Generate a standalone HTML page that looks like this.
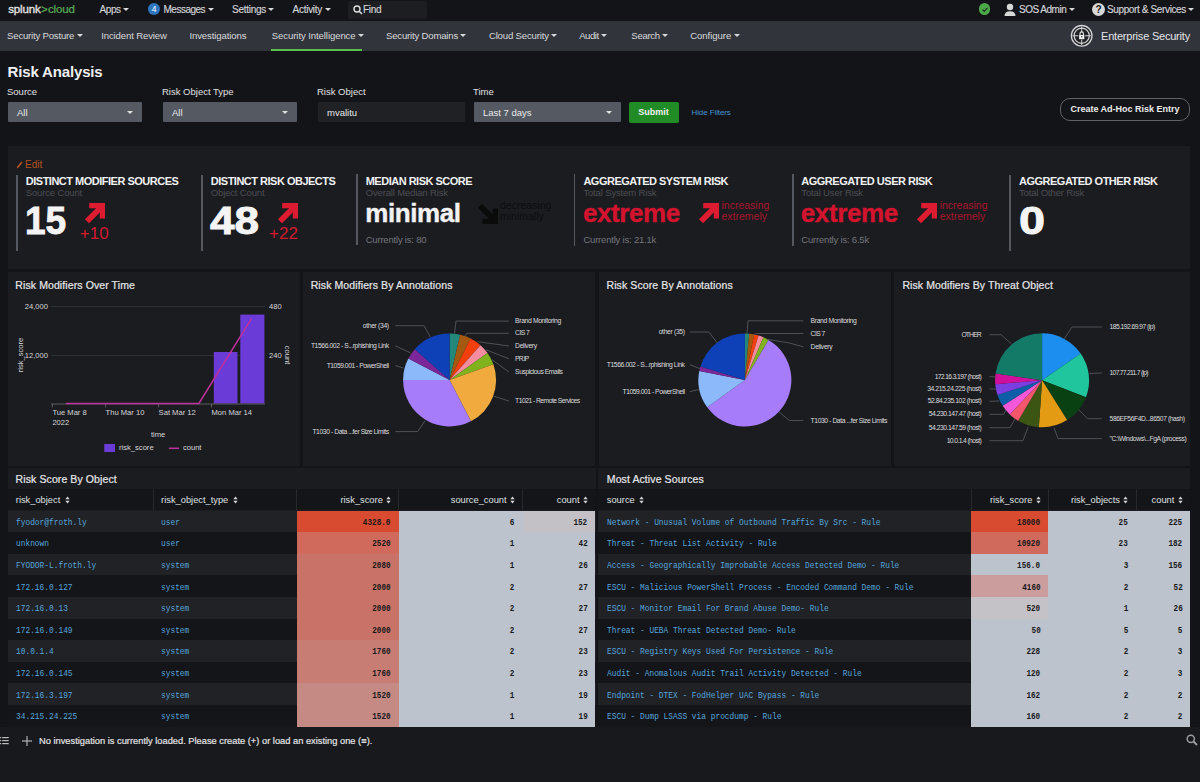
<!DOCTYPE html>
<html><head><meta charset="utf-8">
<style>
*{margin:0;padding:0;box-sizing:border-box}
html,body{width:1200px;height:782px;overflow:hidden;background:#131417;font-family:"Liberation Sans",sans-serif;color:#e6e7e9}
.a{position:absolute;white-space:nowrap}
.tri{display:inline-block;width:0;height:0;border-left:3px solid transparent;border-right:3px solid transparent;border-top:3.5px solid #d8d9db;vertical-align:middle;margin-left:2.5px;letter-spacing:0;position:relative;top:-1px}
#top{position:absolute;left:0;top:0;width:1200px;height:21px;background:#131417}
#top .t{position:absolute;white-space:nowrap;top:4px;font-size:10px;color:#d4d5d8;line-height:12px;-webkit-text-stroke:0.15px #d4d5d8}
#nav{position:absolute;left:0;top:21px;width:1200px;height:30px;background:#31343b}
#nav .t{position:absolute;white-space:nowrap;top:9px;font-size:9.6px;color:#d8d9dc;line-height:11px}
.lbl{position:absolute;white-space:nowrap;top:86px;font-size:9.5px;color:#e0e1e3;line-height:11px}
.dd{position:absolute;top:102px;height:20px;background:#545962;border-radius:1px}
.dd span{position:absolute;left:9px;top:5px;font-size:9.5px;color:#e8e9eb;line-height:11px}
.dd i{position:absolute;right:9px;top:9px;width:0;height:0;border-left:3px solid transparent;border-right:3px solid transparent;border-top:3px solid #e0e0e0}
.svt{top:176.2px;font-size:11px;line-height:11px;font-weight:bold;letter-spacing:-0.5px;color:#f0f1f2}
.svs{top:188.4px;font-size:9.5px;line-height:9.5px;color:#4b4d52;letter-spacing:-0.15px}
.svn{top:201.4px;font-size:39px;line-height:39px;font-weight:bold;color:#f4f4f4;-webkit-text-stroke:0.9px #f4f4f4}
.svd{top:225px;font-size:17px;line-height:17px;color:#d21a2f}
.svw{top:200px;font-size:26px;line-height:26px;font-weight:bold;letter-spacing:-0.4px;-webkit-text-stroke:0.4px currentColor}
.svx{top:199.5px;font-size:10.5px;line-height:11.5px}
.svc{top:234.9px;font-size:9.5px;line-height:9.5px;color:#74767b;letter-spacing:-0.2px}
.ptitle{font-size:10.5px;line-height:10.5px;color:#e6e7e9;letter-spacing:0.1px;-webkit-text-stroke:0.2px #e6e7e9}
.cax{font-size:7.6px;line-height:10px;color:#d6d7d9}
.plab{font-size:6.8px;line-height:8px;color:#dcdcde}
.th{font-size:9.3px;line-height:10px;color:#dfe0e2}
.td{font-family:"Liberation Mono",monospace;font-size:9px;line-height:10px;color:#58a6dc;transform:scaleX(0.873);transform-origin:0 0}
.tn{font-family:"Liberation Mono",monospace;font-size:9px;line-height:10px;color:#17181a;font-weight:bold;transform:scaleX(0.85);transform-origin:100% 0}
</style></head>
<body>
<div id="top">
  <div class="a" style="left:8.2px;top:3px;font-size:11.5px;line-height:13px;letter-spacing:-0.15px;-webkit-text-stroke:0.35px #e2e2e2"><span style="color:#e2e2e2">splunk</span><span style="color:#5cb35a;-webkit-text-stroke:0.2px #5cb35a;margin-left:0.5px">&gt;</span><span style="color:#5cb35a;-webkit-text-stroke:0.2px #5cb35a;margin-left:0.3px">cloud</span></div>
  <div class="t" style="left:99.6px;letter-spacing:-0.45px">Apps<span class="tri"></span></div>
  <div class="a" style="left:148px;top:3px;width:12px;height:12px;border-radius:6px;background:#2f76c0;color:#fff;font-size:8.5px;line-height:12px;text-align:center">4</div>
  <div class="t" style="left:163.5px;letter-spacing:-0.5px">Messages<span class="tri"></span></div>
  <div class="t" style="left:232px;letter-spacing:-0.27px">Settings<span class="tri"></span></div>
  <div class="t" style="left:292.6px;letter-spacing:-0.28px">Activity<span class="tri"></span></div>
  <div class="a" style="left:348px;top:1px;width:79px;height:18px;background:#1c1e22;border-radius:2px"></div>
  <svg class="a" style="left:353px;top:5px" width="10" height="10" viewBox="0 0 10 10"><circle cx="4" cy="4" r="3" fill="none" stroke="#ddd" stroke-width="1.4"/><line x1="6.2" y1="6.2" x2="9" y2="9" stroke="#ddd" stroke-width="1.6"/></svg>
  <div class="t" style="left:363px;letter-spacing:-0.3px">Find</div>
  <div class="a" style="left:978.7px;top:3.3px;width:11.5px;height:11.5px;border-radius:6px;background:#4da84a"></div>
  <svg class="a" style="left:980.5px;top:5.6px" width="8" height="7" viewBox="0 0 8 7"><path d="M1.5 3.6 L3.3 5.3 L6.5 1.8" fill="none" stroke="#163016" stroke-width="1.2"/></svg>
  <svg class="a" style="left:1004px;top:3px" width="12" height="14" viewBox="0 0 12 14"><circle cx="6" cy="4" r="3.2" fill="#d8d8d8"/><path d="M0.5 13 Q0.5 8.2 6 8.2 Q11.5 8.2 11.5 13 Z" fill="#d8d8d8"/></svg>
  <div class="t" style="left:1019px;letter-spacing:-0.5px">SOS Admin<span class="tri"></span></div>
  <div class="a" style="left:1092px;top:3px;width:13px;height:13px;border-radius:7px;background:#d8d8d8;color:#131417;font-weight:bold;font-size:10px;line-height:13px;text-align:center">?</div>
  <div class="t" style="left:1107px;letter-spacing:-0.37px">Support &amp; Services<span class="tri"></span></div>
</div>
<div id="nav">
  <div class="t" style="left:7.1px;letter-spacing:-0.21px">Security Posture<span class="tri"></span></div>
  <div class="t" style="left:101.2px;letter-spacing:-0.14px">Incident Review</div>
  <div class="t" style="left:189.4px;letter-spacing:-0.12px">Investigations</div>
  <div class="t" style="left:271.8px;letter-spacing:-0.1px">Security Intelligence<span class="tri"></span></div>
  <div class="a" style="left:271px;top:28px;width:91px;height:2px;background:#5cc04e"></div>
  <div class="t" style="left:386px;letter-spacing:-0.2px">Security Domains<span class="tri"></span></div>
  <div class="t" style="left:488.9px;letter-spacing:-0.17px">Cloud Security<span class="tri"></span></div>
  <div class="t" style="left:579.2px;letter-spacing:-0.5px">Audit<span class="tri"></span></div>
  <div class="t" style="left:631.3px;letter-spacing:-0.31px">Search<span class="tri"></span></div>
  <div class="t" style="left:690.2px;letter-spacing:-0.06px">Configure<span class="tri"></span></div>
  <svg class="a" style="left:1070px;top:3px" width="24" height="24" viewBox="0 0 24 24">
    <circle cx="11.7" cy="11.8" r="11" fill="#202226"/>
    <circle cx="11.7" cy="11.8" r="10.3" fill="none" stroke="#d4d5d7" stroke-width="1.3"/>
    <circle cx="11.7" cy="11.8" r="7.6" fill="none" stroke="#d4d5d7" stroke-width="1.2"/>
    <path d="M11.7 2.5 V8.2 M11.7 15.8 V21.2 M2.4 11.8 H8.3 M15.1 11.8 H21" stroke="#d4d5d7" stroke-width="1"/>
    <rect x="9.1" y="11" width="5.2" height="4.2" fill="#f0f0f0"/>
    <path d="M10 11 V9.6 A1.7 1.7 0 0 1 13.4 9.6 V11" fill="none" stroke="#e8e8e8" stroke-width="1.1"/>
    <circle cx="11.7" cy="12.8" r="0.7" fill="#333"/>
  </svg>
  <div class="a" style="left:1101px;top:9px;font-size:11px;line-height:13px;color:#e4e5e7;letter-spacing:-0.21px">Enterprise Security</div>
</div>

<div class="a" style="left:7.5px;top:63px;font-size:15px;font-weight:bold;line-height:17px;color:#eeeff1;letter-spacing:-0.15px">Risk Analysis</div>
<div class="lbl" style="left:7px">Source</div>
<div class="lbl" style="left:162px">Risk Object Type</div>
<div class="lbl" style="left:317px">Risk Object</div>
<div class="lbl" style="left:473px">Time</div>
<div class="dd" style="left:8px;width:134px"><span>All</span><i></i></div>
<div class="dd" style="left:163px;width:134px"><span>All</span><i></i></div>
<div class="dd" style="left:318px;width:147px;background:#1f2125"><span>mvalitu</span></div>
<div class="dd" style="left:474px;width:147px"><span>Last 7 days</span><i></i></div>
<div class="a" style="left:628.5px;top:101.5px;width:50px;height:21.5px;background:#218b26;border-radius:2px;color:#f2f2f2;font-size:9px;font-weight:bold;line-height:21.5px;text-align:center">Submit</div>
<div class="a" style="left:691.5px;top:108px;font-size:8px;line-height:10px;color:#4494d4;letter-spacing:-0.1px">Hide Filters</div>
<div class="a" style="left:1060px;top:98.3px;width:130px;height:23px;border:1px solid #606268;border-radius:10px;color:#ececec;font-size:9px;font-weight:bold;line-height:21px;text-align:center">Create Ad-Hoc Risk Entry</div>

<!-- SINGLE VALUES -->
<div id="sv" class="a" style="left:8px;top:146px;width:1182px;height:123px;background:#1b1c20"></div>

<div class="a" style="left:16px;top:159.8px;font-size:10px;line-height:10px;color:#b3521f"><svg width="7" height="8" viewBox="0 0 7 8" style="vertical-align:-1px;margin-right:2px"><path d="M0.8 7.6 L1.2 5.6 L5.4 0.6 L6.6 1.6 L2.4 6.8 Z" fill="#b3521f"/></svg>Edit</div>
<div class="a" style="left:16.0px;top:175px;width:1.5px;height:76px;background:#55585e"></div>
<div class="a svt" style="left:25.8px">DISTINCT MODIFIER SOURCES</div>
<div class="a svs" style="left:25.8px">Source Count</div>
<div class="a svn" style="left:24.8px;transform:scaleX(0.95);transform-origin:0 0">15</div>
<svg class="a" style="left:83.6px;top:203px" width="21" height="21" viewBox="0 0 21 21"><path d="M3 18.2 L16 5.2" stroke="#dd1b31" stroke-width="5.8"/><path d="M5.2 2.6 H18.4 V15.6" fill="none" stroke="#dd1b31" stroke-width="5.2"/></svg>
<div class="a svd" style="left:79.8px">+10</div>
<div class="a" style="left:201.0px;top:175px;width:1.5px;height:76px;background:#55585e"></div>
<div class="a svt" style="left:210.8px">DISTINCT RISK OBJECTS</div>
<div class="a svs" style="left:210.8px">Object Count</div>
<div class="a svn" style="left:209.8px;transform:scaleX(1.13);transform-origin:0 0">48</div>
<svg class="a" style="left:276.5px;top:203px" width="21" height="21" viewBox="0 0 21 21"><path d="M3 18.2 L16 5.2" stroke="#dd1b31" stroke-width="5.8"/><path d="M5.2 2.6 H18.4 V15.6" fill="none" stroke="#dd1b31" stroke-width="5.2"/></svg>
<div class="a svd" style="left:269px">+22</div>
<div class="a" style="left:356.0px;top:174px;width:1.5px;height:71px;background:#55585e"></div>
<div class="a svt" style="left:365.7px">MEDIAN RISK SCORE</div>
<div class="a svs" style="left:365.7px">Overall Median Risk</div>
<div class="a svw" style="left:365.2px;color:#f2f2f2">minimal</div>
<svg class="a" style="left:476.5px;top:204px" width="21" height="20" viewBox="0 0 21 20"><path d="M3 1.8 L16 14.8" stroke="#0b0b0c" stroke-width="5.8"/><path d="M5.2 17.4 H18.4 V4.4" fill="none" stroke="#0b0b0c" stroke-width="5.2"/></svg>
<div class="a svx" style="left:500px;color:#0d0d0f">decreasing<br>minimally</div>
<div class="a svc" style="left:365.7px">Currently is: 80</div>
<div class="a" style="left:573.5px;top:174px;width:1.5px;height:72px;background:#55585e"></div>
<div class="a svt" style="left:583.4px">AGGREGATED SYSTEM RISK</div>
<div class="a svs" style="left:583.4px">Total System Risk</div>
<div class="a svw" style="left:582.9px;color:#d4132f">extreme</div>
<svg class="a" style="left:697.5px;top:203px" width="21" height="21" viewBox="0 0 21 21"><path d="M3 18.2 L16 5.2" stroke="#dd1b31" stroke-width="5.8"/><path d="M5.2 2.6 H18.4 V15.6" fill="none" stroke="#dd1b31" stroke-width="5.2"/></svg>
<div class="a svx" style="left:721.5px;color:#a9152c">increasing<br>extremely</div>
<div class="a svc" style="left:583.4px">Currently is: 21.1k</div>
<div class="a" style="left:792.0px;top:174px;width:1.5px;height:72px;background:#55585e"></div>
<div class="a svt" style="left:801.3px">AGGREGATED USER RISK</div>
<div class="a svs" style="left:801.3px">Total User Risk</div>
<div class="a svw" style="left:800.8px;color:#d4132f">extreme</div>
<svg class="a" style="left:915.7px;top:203px" width="21" height="21" viewBox="0 0 21 21"><path d="M3 18.2 L16 5.2" stroke="#dd1b31" stroke-width="5.8"/><path d="M5.2 2.6 H18.4 V15.6" fill="none" stroke="#dd1b31" stroke-width="5.2"/></svg>
<div class="a svx" style="left:939.7px;color:#a9152c">increasing<br>extremely</div>
<div class="a svc" style="left:801.3px">Currently is: 6.5k</div>
<div class="a" style="left:1009.3px;top:175px;width:1.5px;height:76px;background:#55585e"></div>
<div class="a svt" style="left:1019px">AGGREGATED OTHER RISK</div>
<div class="a svs" style="left:1019px">Total Other Risk</div>
<div class="a svn" style="left:1018.5px;transform:scaleX(1.2);transform-origin:0 0">0</div>

<!-- CHARTS -->
<div class="a" style="left:8px;top:271.5px;width:292px;height:194px;background:#1b1c20"></div>
<div class="a" style="left:303px;top:271.5px;width:292px;height:194px;background:#1b1c20"></div>
<div class="a" style="left:599px;top:271.5px;width:292px;height:194px;background:#1b1c20"></div>
<div class="a" style="left:894px;top:271.5px;width:296px;height:194px;background:#1b1c20"></div>

<!-- CHARTSBODY -->
<div class="a ptitle" style="left:15.3px;top:279.5px">Risk Modifiers Over Time</div>
<div class="a ptitle" style="left:310.7px;top:279.5px">Risk Modifiers By Annotations</div>
<div class="a ptitle" style="left:606.5px;top:279.5px">Risk Score By Annotations</div>
<div class="a ptitle" style="left:902.4px;top:279.5px">Risk Modifiers By Threat Object</div>
<svg class="a" style="left:0;top:0" width="1200" height="782" viewBox="0 0 1200 782">
<line x1="51" y1="306.5" x2="265" y2="306.5" stroke="#2d2f34" stroke-width="1"/>
<line x1="51" y1="355.5" x2="265" y2="355.5" stroke="#2d2f34" stroke-width="1"/>
<rect x="213.8" y="352" width="23.7" height="51.5" fill="#6b3bd8"/>
<rect x="240.3" y="314.6" width="24.1" height="88.9" fill="#6b3bd8"/>
<line x1="51" y1="404" x2="265" y2="404" stroke="#5a5c61" stroke-width="1.2"/>
<line x1="52.4" y1="404" x2="52.4" y2="407.5" stroke="#5a5c61" stroke-width="1"/>
<line x1="105.6" y1="404" x2="105.6" y2="407.5" stroke="#5a5c61" stroke-width="1"/>
<line x1="158.6" y1="404" x2="158.6" y2="407.5" stroke="#5a5c61" stroke-width="1"/>
<line x1="211.5" y1="404" x2="211.5" y2="407.5" stroke="#5a5c61" stroke-width="1"/>
<polyline points="66,403.5 198.9,403.5 251.3,318.8" fill="none" stroke="#c0309c" stroke-width="1.5"/>
<rect x="104.3" y="444" width="10.7" height="8" fill="#6b3bd8"/>
<line x1="168.8" y1="448.3" x2="179" y2="448.3" stroke="#c0309c" stroke-width="1.5"/>
<path d="M449.60 380.00 L449.60 333.50 A46.5 46.5 0 0 1 460.14 334.71 Z" fill="#23887a"/>
<path d="M449.60 380.00 L460.14 334.71 A46.5 46.5 0 0 1 470.64 338.53 Z" fill="#a3590f"/>
<path d="M449.60 380.00 L470.64 338.53 A46.5 46.5 0 0 1 480.41 345.17 Z" fill="#f23f0c"/>
<path d="M449.60 380.00 L480.41 345.17 A46.5 46.5 0 0 1 487.50 353.06 Z" fill="#f68ca0"/>
<path d="M449.60 380.00 L487.50 353.06 A46.5 46.5 0 0 1 493.38 364.33 Z" fill="#7fb21d"/>
<path d="M449.60 380.00 L493.38 364.33 A46.5 46.5 0 0 1 470.93 421.32 Z" fill="#f1aa3d"/>
<path d="M449.60 380.00 L470.93 421.32 A46.5 46.5 0 0 1 403.10 380.00 Z" fill="#a77cfa"/>
<path d="M449.60 380.00 L403.10 380.00 A46.5 46.5 0 0 1 408.35 358.53 Z" fill="#8cb9fa"/>
<path d="M449.60 380.00 L408.35 358.53 A46.5 46.5 0 0 1 414.77 349.19 Z" fill="#7b2799"/>
<path d="M449.60 380.00 L414.77 349.19 A46.5 46.5 0 0 1 449.60 333.50 Z" fill="#0e40b8"/>
<polyline points="508.9,321.1 456.0,321.1 454.5,333.6" fill="none" stroke="#54565b" stroke-width="0.9"/>
<polyline points="508.9,333.3 466.8,333.3 465.0,335.8" fill="none" stroke="#54565b" stroke-width="0.9"/>
<polyline points="508.9,346.0 477.6,341.7" fill="none" stroke="#54565b" stroke-width="0.9"/>
<polyline points="508.9,358.7 485.6,349.7" fill="none" stroke="#54565b" stroke-width="0.9"/>
<polyline points="508.9,372.0 491.9,359.6" fill="none" stroke="#54565b" stroke-width="0.9"/>
<polyline points="508.9,401.0 493.7,396.2" fill="none" stroke="#54565b" stroke-width="0.9"/>
<polyline points="395.3,325.7 424.0,325.7 430.2,336.8" fill="none" stroke="#54565b" stroke-width="0.9"/>
<polyline points="395.3,345.8 410.5,352.9" fill="none" stroke="#54565b" stroke-width="0.9"/>
<polyline points="395.3,365.5 403.4,368.1" fill="none" stroke="#54565b" stroke-width="0.9"/>
<polyline points="395.3,431.6 417.7,431.6 424.9,420.9" fill="none" stroke="#54565b" stroke-width="0.9"/>
<path d="M744.90 380.00 L744.90 333.50 A46.5 46.5 0 0 1 749.20 333.70 Z" fill="#23887a"/>
<path d="M744.90 380.00 L749.20 333.70 A46.5 46.5 0 0 1 754.17 334.43 Z" fill="#a3590f"/>
<path d="M744.90 380.00 L754.17 334.43 A46.5 46.5 0 0 1 758.57 335.56 Z" fill="#f23f0c"/>
<path d="M744.90 380.00 L758.57 335.56 A46.5 46.5 0 0 1 763.44 337.36 Z" fill="#f68ca0"/>
<path d="M744.90 380.00 L763.44 337.36 A46.5 46.5 0 0 1 768.50 339.93 Z" fill="#7fb21d"/>
<path d="M744.90 380.00 L768.50 339.93 A46.5 46.5 0 1 1 707.23 407.27 Z" fill="#a77cfa"/>
<path d="M744.90 380.00 L707.23 407.27 A46.5 46.5 0 0 1 699.30 370.89 Z" fill="#8cb9fa"/>
<path d="M744.90 380.00 L699.30 370.89 A46.5 46.5 0 0 1 700.43 366.40 Z" fill="#7b2799"/>
<path d="M744.90 380.00 L700.43 366.40 A46.5 46.5 0 0 1 744.90 333.50 Z" fill="#0e40b8"/>
<polyline points="803.4,320.8 748.0,320.8 747.0,333.5" fill="none" stroke="#54565b" stroke-width="0.9"/>
<polyline points="803.4,333.5 757.0,333.5 754.0,334.5" fill="none" stroke="#54565b" stroke-width="0.9"/>
<polyline points="803.4,346.8 789.4,343.0 766.4,339.2" fill="none" stroke="#54565b" stroke-width="0.9"/>
<polyline points="803.4,420.5 789.4,420.5 779.0,412.0" fill="none" stroke="#54565b" stroke-width="0.9"/>
<polyline points="690.0,332.0 708.8,332.0 717.3,343.0" fill="none" stroke="#54565b" stroke-width="0.9"/>
<polyline points="690.0,364.7 699.9,368.6" fill="none" stroke="#54565b" stroke-width="0.9"/>
<polyline points="690.0,391.6 698.6,389.5" fill="none" stroke="#54565b" stroke-width="0.9"/>
<path d="M1042.10 380.30 L1042.10 333.30 A47 47 0 0 1 1080.65 353.41 Z" fill="#1b8ef0"/>
<path d="M1042.10 380.30 L1080.65 353.41 A47 47 0 0 1 1085.98 397.14 Z" fill="#21c59d"/>
<path d="M1042.10 380.30 L1085.98 397.14 A47 47 0 0 1 1067.08 420.11 Z" fill="#0a4113"/>
<path d="M1042.10 380.30 L1067.08 420.11 A47 47 0 0 1 1038.82 427.19 Z" fill="#e39b14"/>
<path d="M1042.10 380.30 L1038.82 427.19 A47 47 0 0 1 1018.18 420.75 Z" fill="#3d5513"/>
<path d="M1042.10 380.30 L1018.18 420.75 A47 47 0 0 1 1009.75 414.39 Z" fill="#f5566b"/>
<path d="M1042.10 380.30 L1009.75 414.39 A47 47 0 0 1 1002.64 405.83 Z" fill="#f457d8"/>
<path d="M1042.10 380.30 L1002.64 405.83 A47 47 0 0 1 997.45 394.98 Z" fill="#0d5ea8"/>
<path d="M1042.10 380.30 L997.45 394.98 A47 47 0 0 1 995.26 384.15 Z" fill="#7b3ee0"/>
<path d="M1042.10 380.30 L995.26 384.15 A47 47 0 0 1 995.58 373.60 Z" fill="#d0109c"/>
<path d="M1042.10 380.30 L995.58 373.60 A47 47 0 0 1 1042.10 333.30 Z" fill="#137a68"/>
<polyline points="1101.8,327.0 1072.0,327.0 1064.4,338.6" fill="none" stroke="#54565b" stroke-width="0.9"/>
<polyline points="1101.8,373.0 1089.4,373.5" fill="none" stroke="#54565b" stroke-width="0.9"/>
<polyline points="1101.8,418.7 1087.6,418.7 1078.6,409.7" fill="none" stroke="#54565b" stroke-width="0.9"/>
<polyline points="1101.8,438.6 1058.0,438.6 1054.0,427.7" fill="none" stroke="#54565b" stroke-width="0.9"/>
<polyline points="989.5,334.7 1001.0,334.7 1011.4,343.8" fill="none" stroke="#54565b" stroke-width="0.9"/>
<polyline points="989.5,376.6 996.0,377.0" fill="none" stroke="#54565b" stroke-width="0.9"/>
<polyline points="989.5,389.0 996.5,389.0" fill="none" stroke="#54565b" stroke-width="0.9"/>
<polyline points="989.5,401.4 999.0,401.0" fill="none" stroke="#54565b" stroke-width="0.9"/>
<polyline points="989.5,414.3 1003.7,414.3 1006.0,410.0" fill="none" stroke="#54565b" stroke-width="0.9"/>
<polyline points="989.5,427.7 1010.0,427.7 1015.0,419.0" fill="none" stroke="#54565b" stroke-width="0.9"/>
<polyline points="989.5,440.7 1023.0,440.7 1028.0,427.0" fill="none" stroke="#54565b" stroke-width="0.9"/>
</svg>
<div class="a cax" style="left:24.8px;top:301.7px">24,000</div>
<div class="a cax" style="left:24.8px;top:350.8px">12,000</div>
<div class="a cax" style="left:269px;top:301.7px">480</div>
<div class="a cax" style="left:269px;top:350.8px">240</div>
<div class="a cax" style="left:52.4px;top:408.3px">Tue Mar 8</div>
<div class="a cax" style="left:52.4px;top:418px">2022</div>
<div class="a cax" style="left:105.6px;top:408.3px">Thu Mar 10</div>
<div class="a cax" style="left:158.6px;top:408.3px">Sat Mar 12</div>
<div class="a cax" style="left:211.5px;top:408.3px">Mon Mar 14</div>
<div class="a cax" style="left:150.9px;top:429.6px">time</div>
<div class="a cax" style="left:119px;top:443.3px">risk_score</div>
<div class="a cax" style="left:182.9px;top:443.3px">count</div>
<div class="a cax" style="left:2.6px;top:349.5px;transform:rotate(-90deg);transform-origin:center;width:36px;text-align:center">risk_score</div>
<div class="a cax" style="left:276.5px;top:349.5px;transform:rotate(90deg);transform-origin:center;width:20px;text-align:center">count</div>
<div class="a plab" style="left:515.1px;top:317.1px;letter-spacing:-0.37px">Brand Monitoring</div>
<div class="a plab" style="left:515.1px;top:329.3px;letter-spacing:-0.60px">CIS 7</div>
<div class="a plab" style="left:515.1px;top:342px;letter-spacing:-0.36px">Delivery</div>
<div class="a plab" style="left:515.1px;top:354.7px;letter-spacing:-0.89px">PR.IP</div>
<div class="a plab" style="left:515.1px;top:368px;letter-spacing:-0.46px">Suspicious Emails</div>
<div class="a plab" style="left:515.1px;top:397px;letter-spacing:-0.55px">T1021 - Remote Services</div>
<div class="a plab" style="right:811.25px;top:321.7px;letter-spacing:-0.35px">other (34)</div>
<div class="a plab" style="right:811.33px;top:341.8px;letter-spacing:-0.43px">T1566.002 - S...rphishing Link</div>
<div class="a plab" style="right:811.40px;top:361.5px;letter-spacing:-0.50px">T1059.001 - PowerShell</div>
<div class="a plab" style="right:811.34px;top:427.6px;letter-spacing:-0.44px">T1030 - Data ...fer Size Limits</div>
<div class="a plab" style="left:810.6px;top:316.8px;letter-spacing:-0.37px">Brand Monitoring</div>
<div class="a plab" style="left:810.6px;top:329.5px;letter-spacing:-0.60px">CIS 7</div>
<div class="a plab" style="left:810.6px;top:342.8px;letter-spacing:-0.36px">Delivery</div>
<div class="a plab" style="left:810.6px;top:416.5px;letter-spacing:-0.44px">T1030 - Data ...fer Size Limits</div>
<div class="a plab" style="right:515.35px;top:328px;letter-spacing:-0.35px">other (35)</div>
<div class="a plab" style="right:515.43px;top:360.7px;letter-spacing:-0.43px">T1566.002 - S...rphishing Link</div>
<div class="a plab" style="right:515.50px;top:387.6px;letter-spacing:-0.50px">T1059.001 - PowerShell</div>
<div class="a plab" style="left:1109.6px;top:323px;letter-spacing:-0.56px">185.192.69.97 (ip)</div>
<div class="a plab" style="left:1109.6px;top:369px;letter-spacing:-0.75px">107.77.211.7 (ip)</div>
<div class="a plab" style="left:1109.6px;top:414.7px;letter-spacing:-0.45px">586EF56F4D...86507 (hash)</div>
<div class="a plab" style="left:1109.6px;top:434.6px;letter-spacing:-0.42px">"C:\Windows\...FgA (process)</div>
<div class="a plab" style="right:219.18px;top:330.7px;letter-spacing:-0.88px">OTHER</div>
<div class="a plab" style="right:218.96px;top:372.6px;letter-spacing:-0.66px">172.16.3.197 (host)</div>
<div class="a plab" style="right:218.73px;top:385px;letter-spacing:-0.43px">34.215.24.225 (host)</div>
<div class="a plab" style="right:218.76px;top:397.4px;letter-spacing:-0.46px">52.84.235.102 (host)</div>
<div class="a plab" style="right:218.82px;top:410.3px;letter-spacing:-0.52px">54.230.147.47 (host)</div>
<div class="a plab" style="right:218.82px;top:423.7px;letter-spacing:-0.52px">54.230.147.59 (host)</div>
<div class="a plab" style="right:218.93px;top:436.7px;letter-spacing:-0.63px">10.0.1.4 (host)</div>
<!-- /CHARTSBODY -->

<!-- TABLES -->
<div class="a" style="left:8px;top:468px;width:587.5px;height:258px;background:#1b1c20"></div>
<div class="a ptitle" style="left:15.6px;top:473.6px">Risk Score By Object</div>
<div class="a" style="left:8px;top:488.7px;width:587.5px;height:21.8px;background:#141518"></div>
<div class="a" style="left:152.8px;top:488.7px;width:1px;height:21.8px;background:#26282c"></div>
<div class="a" style="left:296.0px;top:488.7px;width:1px;height:21.8px;background:#26282c"></div>
<div class="a" style="left:398.3px;top:488.7px;width:1px;height:21.8px;background:#26282c"></div>
<div class="a" style="left:522.1px;top:488.7px;width:1px;height:21.8px;background:#26282c"></div>
<div class="a" style="left:8px;top:510.50px;width:587.5px;height:21.65px;background:#202226"></div>
<div class="a" style="left:8px;top:532.10px;width:587.5px;height:21.65px;background:#131518"></div>
<div class="a" style="left:8px;top:553.70px;width:587.5px;height:21.65px;background:#202226"></div>
<div class="a" style="left:8px;top:575.30px;width:587.5px;height:21.65px;background:#131518"></div>
<div class="a" style="left:8px;top:596.90px;width:587.5px;height:21.65px;background:#202226"></div>
<div class="a" style="left:8px;top:618.50px;width:587.5px;height:21.65px;background:#131518"></div>
<div class="a" style="left:8px;top:640.10px;width:587.5px;height:21.65px;background:#202226"></div>
<div class="a" style="left:8px;top:661.70px;width:587.5px;height:21.65px;background:#131518"></div>
<div class="a" style="left:8px;top:683.30px;width:587.5px;height:21.65px;background:#202226"></div>
<div class="a" style="left:8px;top:704.90px;width:587.5px;height:21.65px;background:#131518"></div>
<div class="a" style="left:296.5px;top:510.50px;width:102.30px;height:21.65px;background:#d84b30"></div>
<div class="a" style="left:296.5px;top:532.10px;width:102.30px;height:21.65px;background:#d06a5c"></div>
<div class="a" style="left:296.5px;top:553.70px;width:102.30px;height:21.65px;background:#c97368"></div>
<div class="a" style="left:296.5px;top:575.30px;width:102.30px;height:21.65px;background:#c97368"></div>
<div class="a" style="left:296.5px;top:596.90px;width:102.30px;height:21.65px;background:#c97368"></div>
<div class="a" style="left:296.5px;top:618.50px;width:102.30px;height:21.65px;background:#c97368"></div>
<div class="a" style="left:296.5px;top:640.10px;width:102.30px;height:21.65px;background:#c77d74"></div>
<div class="a" style="left:296.5px;top:661.70px;width:102.30px;height:21.65px;background:#c77d74"></div>
<div class="a" style="left:296.5px;top:683.30px;width:102.30px;height:21.65px;background:#c58a84"></div>
<div class="a" style="left:296.5px;top:704.90px;width:102.30px;height:21.65px;background:#c58a84"></div>
<div class="a" style="left:398.8px;top:510.50px;width:123.80px;height:21.65px;background:#bcc3cd"></div>
<div class="a" style="left:398.8px;top:532.10px;width:123.80px;height:21.65px;background:#bcc3cd"></div>
<div class="a" style="left:398.8px;top:553.70px;width:123.80px;height:21.65px;background:#bcc3cd"></div>
<div class="a" style="left:398.8px;top:575.30px;width:123.80px;height:21.65px;background:#bcc3cd"></div>
<div class="a" style="left:398.8px;top:596.90px;width:123.80px;height:21.65px;background:#bcc3cd"></div>
<div class="a" style="left:398.8px;top:618.50px;width:123.80px;height:21.65px;background:#bcc3cd"></div>
<div class="a" style="left:398.8px;top:640.10px;width:123.80px;height:21.65px;background:#bcc3cd"></div>
<div class="a" style="left:398.8px;top:661.70px;width:123.80px;height:21.65px;background:#bcc3cd"></div>
<div class="a" style="left:398.8px;top:683.30px;width:123.80px;height:21.65px;background:#bcc3cd"></div>
<div class="a" style="left:398.8px;top:704.90px;width:123.80px;height:21.65px;background:#bcc3cd"></div>
<div class="a" style="left:522.6px;top:510.50px;width:72.90px;height:21.65px;background:#c3c0c6"></div>
<div class="a" style="left:522.6px;top:532.10px;width:72.90px;height:21.65px;background:#bcc3cd"></div>
<div class="a" style="left:522.6px;top:553.70px;width:72.90px;height:21.65px;background:#bcc3cd"></div>
<div class="a" style="left:522.6px;top:575.30px;width:72.90px;height:21.65px;background:#bcc3cd"></div>
<div class="a" style="left:522.6px;top:596.90px;width:72.90px;height:21.65px;background:#bcc3cd"></div>
<div class="a" style="left:522.6px;top:618.50px;width:72.90px;height:21.65px;background:#bcc3cd"></div>
<div class="a" style="left:522.6px;top:640.10px;width:72.90px;height:21.65px;background:#bcc3cd"></div>
<div class="a" style="left:522.6px;top:661.70px;width:72.90px;height:21.65px;background:#bcc3cd"></div>
<div class="a" style="left:522.6px;top:683.30px;width:72.90px;height:21.65px;background:#bcc3cd"></div>
<div class="a" style="left:522.6px;top:704.90px;width:72.90px;height:21.65px;background:#bcc3cd"></div>
<div class="a th" style="left:15.8px;top:494.5px">risk_object</div>
<svg class="a" style="left:64.753125px;top:495.8px" width="5" height="8" viewBox="0 0 5 8"><path d="M0.3 3.3 L2.5 0.4 L4.7 3.3 Z M0.3 4.7 L2.5 7.6 L4.7 4.7 Z" fill="#d4d5d8"/></svg>
<div class="a th" style="left:161.10000000000002px;top:494.5px">risk_object_type</div>
<svg class="a" style="left:232.80312500000002px;top:495.8px" width="5" height="8" viewBox="0 0 5 8"><path d="M0.3 3.3 L2.5 0.4 L4.7 3.3 Z M0.3 4.7 L2.5 7.6 L4.7 4.7 Z" fill="#d4d5d8"/></svg>
<div class="a th" style="right:817.2px;top:494.5px">risk_score</div>
<svg class="a" style="left:386.0px;top:495.8px" width="5" height="8" viewBox="0 0 5 8"><path d="M0.3 3.3 L2.5 0.4 L4.7 3.3 Z M0.3 4.7 L2.5 7.6 L4.7 4.7 Z" fill="#d4d5d8"/></svg>
<div class="a th" style="right:693.4px;top:494.5px">source_count</div>
<svg class="a" style="left:509.8px;top:495.8px" width="5" height="8" viewBox="0 0 5 8"><path d="M0.3 3.3 L2.5 0.4 L4.7 3.3 Z M0.3 4.7 L2.5 7.6 L4.7 4.7 Z" fill="#d4d5d8"/></svg>
<div class="a th" style="right:620.5px;top:494.5px">count</div>
<svg class="a" style="left:582.7px;top:495.8px" width="5" height="8" viewBox="0 0 5 8"><path d="M0.3 3.3 L2.5 0.4 L4.7 3.3 Z M0.3 4.7 L2.5 7.6 L4.7 4.7 Z" fill="#d4d5d8"/></svg>
<div class="a td" style="left:15.8px;top:517.80px">fyodor@froth.ly</div>
<div class="a td" style="left:161.10000000000002px;top:517.80px">user</div>
<div class="a tn" style="right:809.2px;top:517.80px">4328.0</div>
<div class="a tn" style="right:685.4px;top:517.80px">6</div>
<div class="a tn" style="right:612.5px;top:517.80px">152</div>
<div class="a td" style="left:15.8px;top:539.40px">unknown</div>
<div class="a td" style="left:161.10000000000002px;top:539.40px">user</div>
<div class="a tn" style="right:809.2px;top:539.40px">2520</div>
<div class="a tn" style="right:685.4px;top:539.40px">1</div>
<div class="a tn" style="right:612.5px;top:539.40px">42</div>
<div class="a td" style="left:15.8px;top:561.00px">FYODOR-L.froth.ly</div>
<div class="a td" style="left:161.10000000000002px;top:561.00px">system</div>
<div class="a tn" style="right:809.2px;top:561.00px">2080</div>
<div class="a tn" style="right:685.4px;top:561.00px">1</div>
<div class="a tn" style="right:612.5px;top:561.00px">26</div>
<div class="a td" style="left:15.8px;top:582.60px">172.16.0.127</div>
<div class="a td" style="left:161.10000000000002px;top:582.60px">system</div>
<div class="a tn" style="right:809.2px;top:582.60px">2000</div>
<div class="a tn" style="right:685.4px;top:582.60px">2</div>
<div class="a tn" style="right:612.5px;top:582.60px">27</div>
<div class="a td" style="left:15.8px;top:604.20px">172.16.0.13</div>
<div class="a td" style="left:161.10000000000002px;top:604.20px">system</div>
<div class="a tn" style="right:809.2px;top:604.20px">2000</div>
<div class="a tn" style="right:685.4px;top:604.20px">2</div>
<div class="a tn" style="right:612.5px;top:604.20px">27</div>
<div class="a td" style="left:15.8px;top:625.80px">172.16.0.149</div>
<div class="a td" style="left:161.10000000000002px;top:625.80px">system</div>
<div class="a tn" style="right:809.2px;top:625.80px">2000</div>
<div class="a tn" style="right:685.4px;top:625.80px">2</div>
<div class="a tn" style="right:612.5px;top:625.80px">27</div>
<div class="a td" style="left:15.8px;top:647.40px">10.0.1.4</div>
<div class="a td" style="left:161.10000000000002px;top:647.40px">system</div>
<div class="a tn" style="right:809.2px;top:647.40px">1760</div>
<div class="a tn" style="right:685.4px;top:647.40px">2</div>
<div class="a tn" style="right:612.5px;top:647.40px">23</div>
<div class="a td" style="left:15.8px;top:669.00px">172.16.0.145</div>
<div class="a td" style="left:161.10000000000002px;top:669.00px">system</div>
<div class="a tn" style="right:809.2px;top:669.00px">1760</div>
<div class="a tn" style="right:685.4px;top:669.00px">2</div>
<div class="a tn" style="right:612.5px;top:669.00px">23</div>
<div class="a td" style="left:15.8px;top:690.60px">172.16.3.197</div>
<div class="a td" style="left:161.10000000000002px;top:690.60px">system</div>
<div class="a tn" style="right:809.2px;top:690.60px">1520</div>
<div class="a tn" style="right:685.4px;top:690.60px">1</div>
<div class="a tn" style="right:612.5px;top:690.60px">19</div>
<div class="a td" style="left:15.8px;top:712.20px">34.215.24.225</div>
<div class="a td" style="left:161.10000000000002px;top:712.20px">system</div>
<div class="a tn" style="right:809.2px;top:712.20px">1520</div>
<div class="a tn" style="right:685.4px;top:712.20px">1</div>
<div class="a tn" style="right:612.5px;top:712.20px">19</div>
<div class="a" style="left:598px;top:468px;width:592.3px;height:258px;background:#1b1c20"></div>
<div class="a ptitle" style="left:606.8px;top:473.6px">Most Active Sources</div>
<div class="a" style="left:598px;top:488.7px;width:592.3px;height:21.8px;background:#141518"></div>
<div class="a" style="left:970.5px;top:488.7px;width:1px;height:21.8px;background:#26282c"></div>
<div class="a" style="left:1047.8px;top:488.7px;width:1px;height:21.8px;background:#26282c"></div>
<div class="a" style="left:1135.5px;top:488.7px;width:1px;height:21.8px;background:#26282c"></div>
<div class="a" style="left:598px;top:510.50px;width:592.3px;height:21.65px;background:#202226"></div>
<div class="a" style="left:598px;top:532.10px;width:592.3px;height:21.65px;background:#131518"></div>
<div class="a" style="left:598px;top:553.70px;width:592.3px;height:21.65px;background:#202226"></div>
<div class="a" style="left:598px;top:575.30px;width:592.3px;height:21.65px;background:#131518"></div>
<div class="a" style="left:598px;top:596.90px;width:592.3px;height:21.65px;background:#202226"></div>
<div class="a" style="left:598px;top:618.50px;width:592.3px;height:21.65px;background:#131518"></div>
<div class="a" style="left:598px;top:640.10px;width:592.3px;height:21.65px;background:#202226"></div>
<div class="a" style="left:598px;top:661.70px;width:592.3px;height:21.65px;background:#131518"></div>
<div class="a" style="left:598px;top:683.30px;width:592.3px;height:21.65px;background:#202226"></div>
<div class="a" style="left:598px;top:704.90px;width:592.3px;height:21.65px;background:#131518"></div>
<div class="a" style="left:971px;top:510.50px;width:77.30px;height:21.65px;background:#d84b30"></div>
<div class="a" style="left:971px;top:532.10px;width:77.30px;height:21.65px;background:#d06a5c"></div>
<div class="a" style="left:971px;top:553.70px;width:77.30px;height:21.65px;background:#bcc3cd"></div>
<div class="a" style="left:971px;top:575.30px;width:77.30px;height:21.65px;background:#cb9d9d"></div>
<div class="a" style="left:971px;top:596.90px;width:77.30px;height:21.65px;background:#c4c1c7"></div>
<div class="a" style="left:971px;top:618.50px;width:77.30px;height:21.65px;background:#bcc3cd"></div>
<div class="a" style="left:971px;top:640.10px;width:77.30px;height:21.65px;background:#bcc3cd"></div>
<div class="a" style="left:971px;top:661.70px;width:77.30px;height:21.65px;background:#bcc3cd"></div>
<div class="a" style="left:971px;top:683.30px;width:77.30px;height:21.65px;background:#bcc3cd"></div>
<div class="a" style="left:971px;top:704.90px;width:77.30px;height:21.65px;background:#bcc3cd"></div>
<div class="a" style="left:1048.3px;top:510.50px;width:87.70px;height:21.65px;background:#bcc3cd"></div>
<div class="a" style="left:1048.3px;top:532.10px;width:87.70px;height:21.65px;background:#bcc3cd"></div>
<div class="a" style="left:1048.3px;top:553.70px;width:87.70px;height:21.65px;background:#bcc3cd"></div>
<div class="a" style="left:1048.3px;top:575.30px;width:87.70px;height:21.65px;background:#bcc3cd"></div>
<div class="a" style="left:1048.3px;top:596.90px;width:87.70px;height:21.65px;background:#bcc3cd"></div>
<div class="a" style="left:1048.3px;top:618.50px;width:87.70px;height:21.65px;background:#bcc3cd"></div>
<div class="a" style="left:1048.3px;top:640.10px;width:87.70px;height:21.65px;background:#bcc3cd"></div>
<div class="a" style="left:1048.3px;top:661.70px;width:87.70px;height:21.65px;background:#bcc3cd"></div>
<div class="a" style="left:1048.3px;top:683.30px;width:87.70px;height:21.65px;background:#bcc3cd"></div>
<div class="a" style="left:1048.3px;top:704.90px;width:87.70px;height:21.65px;background:#bcc3cd"></div>
<div class="a" style="left:1136px;top:510.50px;width:54.30px;height:21.65px;background:#bcc3cd"></div>
<div class="a" style="left:1136px;top:532.10px;width:54.30px;height:21.65px;background:#bcc3cd"></div>
<div class="a" style="left:1136px;top:553.70px;width:54.30px;height:21.65px;background:#bcc3cd"></div>
<div class="a" style="left:1136px;top:575.30px;width:54.30px;height:21.65px;background:#bcc3cd"></div>
<div class="a" style="left:1136px;top:596.90px;width:54.30px;height:21.65px;background:#bcc3cd"></div>
<div class="a" style="left:1136px;top:618.50px;width:54.30px;height:21.65px;background:#bcc3cd"></div>
<div class="a" style="left:1136px;top:640.10px;width:54.30px;height:21.65px;background:#bcc3cd"></div>
<div class="a" style="left:1136px;top:661.70px;width:54.30px;height:21.65px;background:#bcc3cd"></div>
<div class="a" style="left:1136px;top:683.30px;width:54.30px;height:21.65px;background:#bcc3cd"></div>
<div class="a" style="left:1136px;top:704.90px;width:54.30px;height:21.65px;background:#bcc3cd"></div>
<div class="a th" style="left:606.8px;top:494.5px">source</div>
<svg class="a" style="left:639.221875px;top:495.8px" width="5" height="8" viewBox="0 0 5 8"><path d="M0.3 3.3 L2.5 0.4 L4.7 3.3 Z M0.3 4.7 L2.5 7.6 L4.7 4.7 Z" fill="#d4d5d8"/></svg>
<div class="a th" style="right:167.70000000000005px;top:494.5px">risk_score</div>
<svg class="a" style="left:1035.5px;top:495.8px" width="5" height="8" viewBox="0 0 5 8"><path d="M0.3 3.3 L2.5 0.4 L4.7 3.3 Z M0.3 4.7 L2.5 7.6 L4.7 4.7 Z" fill="#d4d5d8"/></svg>
<div class="a th" style="right:80px;top:494.5px">risk_objects</div>
<svg class="a" style="left:1123.2px;top:495.8px" width="5" height="8" viewBox="0 0 5 8"><path d="M0.3 3.3 L2.5 0.4 L4.7 3.3 Z M0.3 4.7 L2.5 7.6 L4.7 4.7 Z" fill="#d4d5d8"/></svg>
<div class="a th" style="right:25.700000000000045px;top:494.5px">count</div>
<svg class="a" style="left:1177.5px;top:495.8px" width="5" height="8" viewBox="0 0 5 8"><path d="M0.3 3.3 L2.5 0.4 L4.7 3.3 Z M0.3 4.7 L2.5 7.6 L4.7 4.7 Z" fill="#d4d5d8"/></svg>
<div class="a td" style="left:606.8px;top:517.80px">Network - Unusual Volume of Outbound Traffic By Src - Rule</div>
<div class="a tn" style="right:159.70000000000005px;top:517.80px">18000</div>
<div class="a tn" style="right:72px;top:517.80px">25</div>
<div class="a tn" style="right:17.700000000000045px;top:517.80px">225</div>
<div class="a td" style="left:606.8px;top:539.40px">Threat - Threat List Activity - Rule</div>
<div class="a tn" style="right:159.70000000000005px;top:539.40px">10920</div>
<div class="a tn" style="right:72px;top:539.40px">23</div>
<div class="a tn" style="right:17.700000000000045px;top:539.40px">182</div>
<div class="a td" style="left:606.8px;top:561.00px">Access - Geographically Improbable Access Detected Demo - Rule</div>
<div class="a tn" style="right:159.70000000000005px;top:561.00px">156.0</div>
<div class="a tn" style="right:72px;top:561.00px">3</div>
<div class="a tn" style="right:17.700000000000045px;top:561.00px">156</div>
<div class="a td" style="left:606.8px;top:582.60px">ESCU - Malicious PowerShell Process - Encoded Command Demo - Rule</div>
<div class="a tn" style="right:159.70000000000005px;top:582.60px">4160</div>
<div class="a tn" style="right:72px;top:582.60px">2</div>
<div class="a tn" style="right:17.700000000000045px;top:582.60px">52</div>
<div class="a td" style="left:606.8px;top:604.20px">ESCU - Monitor Email For Brand Abuse Demo- Rule</div>
<div class="a tn" style="right:159.70000000000005px;top:604.20px">520</div>
<div class="a tn" style="right:72px;top:604.20px">1</div>
<div class="a tn" style="right:17.700000000000045px;top:604.20px">26</div>
<div class="a td" style="left:606.8px;top:625.80px">Threat - UEBA Threat Detected Demo- Rule</div>
<div class="a tn" style="right:159.70000000000005px;top:625.80px">50</div>
<div class="a tn" style="right:72px;top:625.80px">5</div>
<div class="a tn" style="right:17.700000000000045px;top:625.80px">5</div>
<div class="a td" style="left:606.8px;top:647.40px">ESCU - Registry Keys Used For Persistence - Rule</div>
<div class="a tn" style="right:159.70000000000005px;top:647.40px">228</div>
<div class="a tn" style="right:72px;top:647.40px">2</div>
<div class="a tn" style="right:17.700000000000045px;top:647.40px">3</div>
<div class="a td" style="left:606.8px;top:669.00px">Audit - Anomalous Audit Trail Activity Detected - Rule</div>
<div class="a tn" style="right:159.70000000000005px;top:669.00px">120</div>
<div class="a tn" style="right:72px;top:669.00px">2</div>
<div class="a tn" style="right:17.700000000000045px;top:669.00px">3</div>
<div class="a td" style="left:606.8px;top:690.60px">Endpoint - DTEX - FodHelper UAC Bypass - Rule</div>
<div class="a tn" style="right:159.70000000000005px;top:690.60px">162</div>
<div class="a tn" style="right:72px;top:690.60px">2</div>
<div class="a tn" style="right:17.700000000000045px;top:690.60px">2</div>
<div class="a td" style="left:606.8px;top:712.20px">ESCU - Dump LSASS via procdump - Rule</div>
<div class="a tn" style="right:159.70000000000005px;top:712.20px">160</div>
<div class="a tn" style="right:72px;top:712.20px">2</div>
<div class="a tn" style="right:17.700000000000045px;top:712.20px">2</div>
<!-- /TABLES -->
<!-- BOTTOM -->
<div class="a" style="left:0;top:727px;width:1200px;height:55px;background:#18191c"></div>
<svg class="a" style="left:0;top:736px" width="9" height="9" viewBox="0 0 9 9"><rect x="0" y="1" width="1.2" height="1.2" fill="#bbb"/><rect x="2.2" y="1" width="6.5" height="1.2" fill="#bbb"/><rect x="0" y="4" width="1.2" height="1.2" fill="#bbb"/><rect x="2.2" y="4" width="6.5" height="1.2" fill="#bbb"/><rect x="0" y="7" width="1.2" height="1.2" fill="#bbb"/><rect x="2.2" y="7" width="6.5" height="1.2" fill="#bbb"/></svg>
<svg class="a" style="left:21.5px;top:735.5px" width="10" height="10" viewBox="0 0 10 10"><line x1="5" y1="0" x2="5" y2="10" stroke="#bdbec0" stroke-width="1.1"/><line x1="0" y1="5" x2="10" y2="5" stroke="#bdbec0" stroke-width="1.1"/></svg>
<div class="a" style="left:39px;top:735.5px;font-size:9.3px;line-height:10px;color:#e2e3e5;-webkit-text-stroke:0.2px #e2e3e5">No investigation is currently loaded. Please create (+) or load an existing one (&#8801;).</div>
<svg class="a" style="left:1186px;top:734px" width="12" height="12" viewBox="0 0 12 12"><circle cx="4.8" cy="4.8" r="3.6" fill="none" stroke="#9a9b9e" stroke-width="1.5"/><line x1="7.5" y1="7.5" x2="11" y2="11" stroke="#9a9b9e" stroke-width="2"/></svg>
</body></html>
